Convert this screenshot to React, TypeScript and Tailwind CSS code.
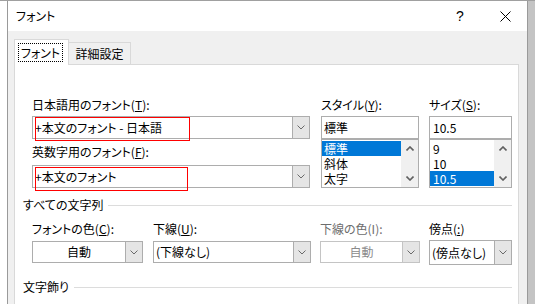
const font = "font-['Noto_Sans_CJK_JP',sans-serif] [font-feature-settings:'palt']";

function Chevron({ dir = "down", bold }: { dir?: "up" | "down"; bold?: boolean }) {
  const d = dir === "down" ? "M0.5 0.5 L4 4 L7.5 0.5" : "M0.5 4.5 L4 1 L7.5 4.5";
  return (
    <svg width="8" height="5" viewBox="0 0 8 5" className="block">
      <path d={d} fill="none" stroke={bold ? "#606060" : "#6a6a6a"} strokeWidth={bold ? 1.6 : 1} />
    </svg>
  );
}

function Combo({
  text,
  center,
  disabled,
  className = "",
  children,
}: {
  text: string;
  center?: boolean;
  disabled?: boolean;
  className?: string;
  children?: React.ReactNode;
}) {
  return (
    <div className={`relative flex border bg-white ${disabled ? "border-[#c4c4c4]" : "border-[#adadad]"} ${className}`}>
      <div
        className={`flex-1 flex items-center whitespace-nowrap ${center ? "justify-center" : "pl-[2px]"} ${
          disabled ? "text-[#8a8a8a]" : "text-black"
        }`}
      >
        {text}
      </div>
      <div className={`w-[17px] flex items-center justify-center bg-[#e5e5e5] border-l ${disabled ? "border-[#c4c4c4]" : "border-[#adadad]"}`}>
        <Chevron />
      </div>
      {children}
    </div>
  );
}

function ListBox({ items, selected, pad = "pl-[2px]" }: { items: string[]; selected: number; pad?: string }) {
  return (
    <div className="h-[49px] flex border border-[#adadad] bg-white">
      <div className="flex-1 pt-px">
        {items.map((it, i) => (
          <div
            key={it}
            className={`h-[15px] leading-[15px] ${pad} ${i === selected ? "bg-[#0078d7] text-white" : "text-black"}`}
          >
            {it}
          </div>
        ))}
      </div>
      <div className="w-[17px] bg-[#f0f0f0] flex flex-col justify-between">
        <div className="h-[17px] flex items-center justify-center">
          <Chevron dir="up" bold />
        </div>
        <div className="h-[17px] flex items-center justify-center">
          <Chevron bold />
        </div>
      </div>
    </div>
  );
}

function Label({ children, disabled }: { children: React.ReactNode; disabled?: boolean }) {
  return <div className={`h-[16px] leading-[16px] whitespace-nowrap ${disabled ? "text-[#6d6d6d]" : ""}`}>{children}</div>;
}

function Group({ title, className = "" }: { title: string; className?: string }) {
  return (
    <div className={`h-[16px] flex items-center w-[489px] ${className}`}>
      <span className="leading-[16px] whitespace-nowrap">{title}</span>
      <div className="flex-1 h-px bg-[#dcdcdc] ml-[5px]" />
    </div>
  );
}

export default function App() {
  return (
    <div className={`w-[535px] h-[304px] flex overflow-hidden bg-white border-t border-[#a0a0a0] text-[12px] text-black ${font}`}>
      <div className="w-[7px] bg-white" />
      <div className="w-[521px] flex flex-col border-x border-[#9a9a9a]">
        <div className="h-[30px] shrink-0 bg-white flex items-center">
          <span className="pl-[8px]">フォント</span>
          <div className="flex-1" />
          <div className="w-[46px] flex justify-center text-[14px] font-['Liberation_Sans',sans-serif]">?</div>
          <div className="w-[44px] flex justify-center">
            <svg width="11" height="11" viewBox="0 0 11 11">
              <path d="M0.5 0.5 L10.5 10.5 M10.5 0.5 L0.5 10.5" stroke="#000" strokeWidth="1" />
            </svg>
          </div>
        </div>
        <div className="flex-1 bg-[#f0f0f0] pl-[6px] pr-[8px] pt-[8px]">
          <div className="h-[25px] flex items-end">
            <div className="relative z-10 h-[26px] -mb-px w-[55px] bg-white border-t border-x border-[#d9d9d9] pt-[3px] pl-[3px]">
              <div className="w-[45px] h-[19px] border border-dotted border-black flex items-center justify-center">
                フォント
              </div>
            </div>
            <div className="h-[22px] w-[62px] border-t border-r border-[#d9d9d9] flex items-center justify-center">
              詳細設定
            </div>
          </div>
          <div className="h-[260px] bg-white border border-[#d9d9d9] pl-[8px] pt-[32px]">
            <div className="flex ml-[9px]">
              <div className="w-[278px]">
                <Label>
                  日本語用のフォント(<span className="underline">T</span>):
                </Label>
                <Combo text="+本文のフォント - 日本語" className="mt-[3px] h-[23px]">
                  <div className="absolute left-[2px] top-0 w-[155px] h-[24px] border border-[#ff0000]" />
                </Combo>
                <div className="mt-[5px]">
                  <Label>
                    英数字用のフォント(<span className="underline">F</span>):
                  </Label>
                </div>
                <Combo text="+本文のフォント" className="mt-[5px] h-[23px]">
                  <div className="absolute left-[2px] top-px w-[153px] h-[24px] border border-[#ff0000]" />
                </Combo>
              </div>
              <div className="w-[98px] ml-[11px]">
                <Label>
                  スタイル(<span className="underline">Y</span>):
                </Label>
                <div className="mt-[3px] h-[23px] border border-[#adadad] bg-white flex items-center pl-[2px]">標準</div>
                <ListBox items={["標準", "斜体", "太字"]} selected={0} />
              </div>
              <div className="w-[83px] ml-[10px]">
                <Label>
                  サイズ(<span className="underline">S</span>):
                </Label>
                <div className="mt-[3px] h-[23px] border border-[#adadad] bg-white flex items-center pl-[3px]">10.5</div>
                <ListBox items={["9", "10", "10.5"]} selected={2} pad="pl-[3px]" />
              </div>
            </div>

            <Group title="すべての文字列" className="mt-[9px]" />
            <div className="flex ml-[9px] mt-[8px]">
              <div className="w-[111px]">
                <Label>
                  フォントの色(<span className="underline">C</span>):
                </Label>
                <Combo text="自動" center className="mt-[4px] h-[22px]" />
              </div>
              <div className="w-[158px] ml-[10px]">
                <Label>
                  下線(<span className="underline">U</span>):
                </Label>
                <Combo text="(下線なし)" className="mt-[4px] h-[22px]" />
              </div>
              <div className="w-[100px] ml-[9px]">
                <Label disabled>下線の色(I):</Label>
                <Combo text="自動" center disabled className="mt-[4px] h-[22px]" />
              </div>
              <div className="w-[83px] ml-[9px]">
                <Label>
                  傍点(<span className="underline">:</span>)
                </Label>
                <Combo text="(傍点なし)" className="mt-[3px] h-[25px]" />
              </div>
            </div>

            <Group title="文字飾り" className="mt-[14px]" />
          </div>
        </div>
      </div>
      <div className="w-[7px] bg-[#c4c4c4]" />
    </div>
  );
}
